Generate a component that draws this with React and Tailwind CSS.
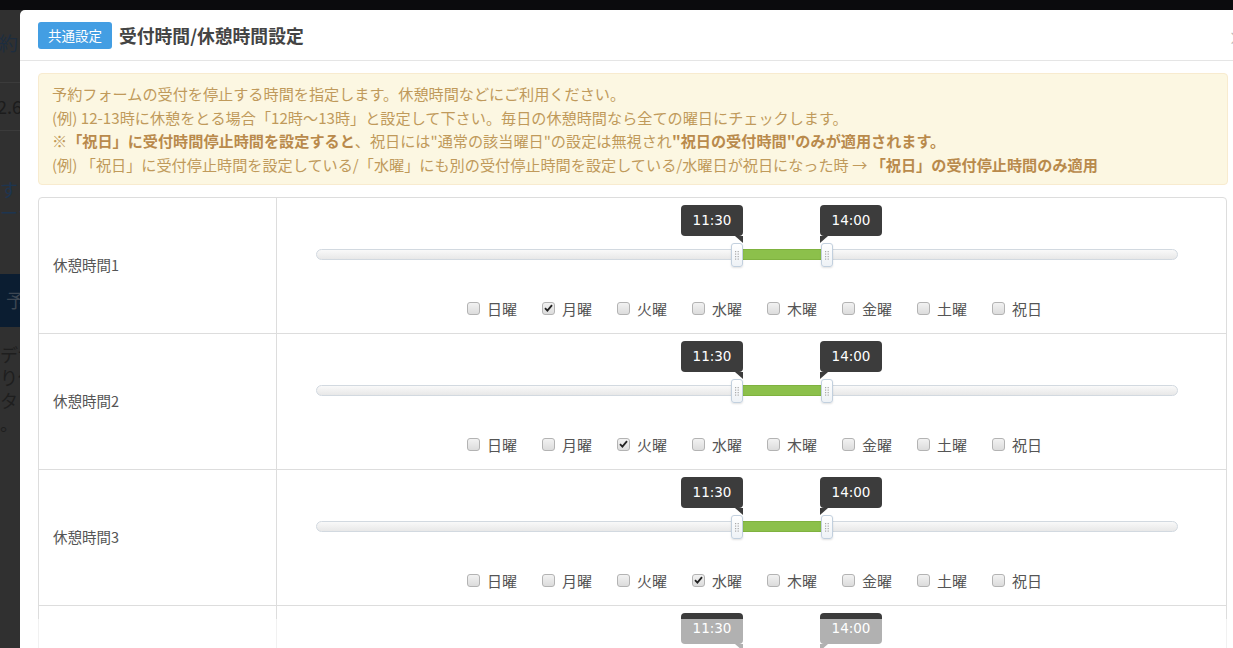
import React from "react";

const FONT = { fontFamily: "'Noto Sans CJK JP', 'Noto Sans', sans-serif" };
const days = ["日曜", "月曜", "火曜", "水曜", "木曜", "金曜", "土曜", "祝日"];
const rows = [
  { label: "休憩時間1", checked: 1 },
  { label: "休憩時間2", checked: 2 },
  { label: "休憩時間3", checked: 3 },
  { label: "休憩時間4", checked: -1 },
];

function Handle({ className }) {
  return (
    <div
      className={
        "absolute top-[38px] w-[12px] h-[24px] rounded-[3px] border border-[#c2d0de] bg-gradient-to-b from-white to-[#eef2f6] shadow-[0_1px_2px_rgba(0,0,0,0.12)] flex items-center justify-center " +
        className
      }
    >
      <svg width="4" height="9" viewBox="0 0 4 9">
        {[0, 2.5, 5, 7.5].map((y) => (
          <g key={y}>
            <rect x="0" y={y} width="1.2" height="1.2" fill="#a9a9a9" />
            <rect x="2.6" y={y} width="1.2" height="1.2" fill="#a9a9a9" />
          </g>
        ))}
      </svg>
    </div>
  );
}

function Tip({ text, className, side }) {
  return (
    <div className={"absolute top-0 w-[62px] h-[31px] " + className}>
      <div
        className="w-full h-full rounded-[4px] bg-[#3c3c3c] text-white text-[13.5px] flex items-center justify-center"
        style={{ fontFamily: "'DejaVu Sans', Verdana, sans-serif" }}
      >
        {text}
      </div>
      <svg
        width="8"
        height="7"
        viewBox="0 0 8 7"
        className={"absolute top-[31px] " + (side === "right" ? "right-0" : "left-0")}
      >
        <polygon points={side === "right" ? "0,0 8,0 8,7" : "0,0 8,0 0,7"} fill="#3c3c3c" />
      </svg>
    </div>
  );
}

function Checkbox({ checked }) {
  return (
    <div className="w-[13px] h-[13px] rounded-[3px] border border-[#b3b3b3] bg-gradient-to-b from-[#f2f2f2] to-[#dcdcdc] flex items-center justify-center">
      {checked && (
        <svg width="9" height="8" viewBox="0 0 9 8">
          <path d="M1 4.2 L3.4 6.6 L8 1.2" stroke="#222" strokeWidth="1.8" fill="none" />
        </svg>
      )}
    </div>
  );
}

function Row({ label, checked, last }) {
  return (
    <div className={"flex h-[136px] " + (last ? "" : "border-b border-[#dddddd]")}>
      <div className="w-[238px] shrink-0 border-r border-[#dddddd] pl-[14px] flex items-center text-[14.5px] text-[#555] leading-none">
        {label}
      </div>
      <div className="flex-1 pt-[7px]">
        <div className="relative ml-[39px] mr-[48px] h-[62px]">
          <div className="absolute left-0 right-0 top-[44px] h-[11px] rounded-full border border-[#d2d9e0] bg-gradient-to-b from-[#f9f9f9] to-[#e8e8e8]" />
          <div className="absolute left-[427px] w-[78px] top-[44px] h-[11px] bg-[#8cc04b] border-y border-[#7fb23f]" />
          <Handle className="left-[415px]" />
          <Handle className="left-[505px]" />
          <Tip text="11:30" className="left-[365px]" side="right" />
          <Tip text="14:00" className="left-[504px]" side="left" />
        </div>
        <div className="mt-[30px] flex justify-center pl-[6px] gap-[25px] h-[22px] items-center">
          {days.map((d, i) => (
            <div key={d} className="flex items-center gap-[7px]">
              <Checkbox checked={i === checked} />
              <span className="text-[15px] text-[#555] leading-none">{d}</span>
            </div>
          ))}
        </div>
      </div>
    </div>
  );
}

export default function App() {
  return (
    <div className="relative w-[1233px] h-[648px] overflow-hidden bg-[#303030]" style={FONT}>
      {/* dimmed page behind modal */}
      <div className="flex flex-col w-full h-full">
        <div className="h-[10px] bg-[#0b0b0d]" />
        <div className="h-[73px] border-b border-[#3b3b3b] flex items-center text-[19px] text-[#1d2d3f] -ml-[1px] pb-[6px]">
          約ア
        </div>
        <div className="h-[48px] border-b border-[#3b3b3b] flex items-center text-[18px] text-[#1c1c1c] -ml-[3px]">
          2.6
        </div>
        <div className="pt-[47px] text-[18px] leading-[23px] text-[#1d3550]">
          <div>する</div>
          <div>ージ</div>
        </div>
        <div className="mt-[50px] h-[53px] bg-[#0b1d31] flex items-center pl-[6px] text-[19px] text-[#3d4753]">
          予
        </div>
        <div className="pt-[16px] text-[18px] leading-[23px] text-[#1e1e1e]">
          <div>デザ</div>
          <div>り仕</div>
          <div>タン</div>
          <div>。</div>
        </div>
      </div>

      {/* modal */}
      <div className="absolute left-[20px] top-[10px] w-[1240px] h-[660px] bg-white rounded-tl-[5px]">
        <div className="h-[51px] border-b border-[#e5e5e5] flex items-center pl-[18px] gap-[7px] relative">
          <span className="h-[27px] px-[10px] rounded-[3px] bg-[#439ee3] text-white text-[13.5px] flex items-center">
            共通設定
          </span>
          <span className="text-[17.8px] font-bold text-[#444]">受付時間/休憩時間設定</span>
          <span className="absolute left-[1208px] top-[14px] text-[18px] text-[#bbb]">×</span>
        </div>
        <div className="px-[18px] pt-[12px]">
          <div className="w-[1190px] rounded-[4px] border border-[#f8ebcf] bg-[#fcf7e2] px-[13px] py-[8px] text-[15.15px] leading-[23.5px] text-[#c09a5b]">
            <div>予約フォームの受付を停止する時間を指定します。休憩時間などにご利用ください。</div>
            <div>(例) 12-13時に休憩をとる場合「12時～13時」と設定して下さい。毎日の休憩時間なら全ての曜日にチェックします。</div>
            <div>
              ※<b className="text-[#b98a4c]">「祝日」に受付時間停止時間を設定すると</b>、祝日には"通常の該当曜日"の設定は無視され
              <b className="text-[#b98a4c]">"祝日の受付時間"のみが適用されます。</b>
            </div>
            <div>
              (例) 「祝日」に受付停止時間を設定している/「水曜」にも別の受付停止時間を設定している/水曜日が祝日になった時 →{" "}
              <b className="text-[#b98a4c]">「祝日」の受付停止時間のみ適用</b>
            </div>
          </div>
          <div className="mt-[12px] w-[1189px] rounded-[4px] border border-[#dddddd]">
            {rows.map((r, i) => (
              <Row key={r.label} label={r.label} checked={r.checked} last={i === rows.length - 1} />
            ))}
          </div>
        </div>
        <div className="absolute left-0 right-0 top-[609px] bottom-0 bg-white/60" />
      </div>
    </div>
  );
}
